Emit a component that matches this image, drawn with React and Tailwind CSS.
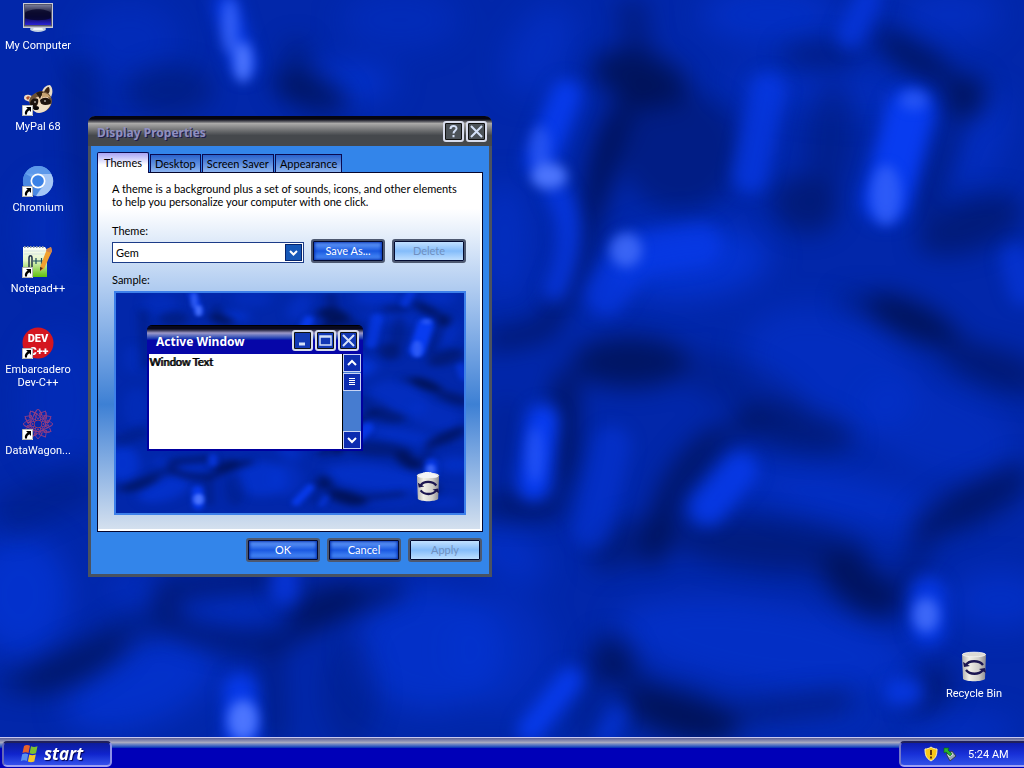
import { useState } from 'react'

// broad pads of lighter blue: cx, cy, rx, ry, rotation, opacity
const pads = [
  [770, 15, 70, 30, 0, 0.6],
  [950, 15, 50, 26, 0, 0.5],
  [830, 90, 110, 22, 5, 0.4],
  [540, 50, 30, 50, 30, 0.5],
  [505, 240, 26, 60, 0, 0.5],
  [980, 140, 24, 50, 20, 0.5],
  [830, 370, 90, 60, 20, 0.5],
  [940, 430, 80, 45, 20, 0.4],
  [850, 500, 110, 24, 12, 0.6],
  [765, 645, 150, 44, 8, 0.65],
  [430, 650, 75, 60, 0, 0.7],
  [140, 685, 80, 40, -20, 0.75],
  [20, 595, 50, 60, 0, 0.8],
  [225, 607, 50, 18, 0, 0.5],
  [135, 590, 30, 16, 0, 0.5],
  [510, 555, 40, 24, 30, 0.6],
  [1000, 600, 50, 30, 0, 0.6],
  [800, 722, 90, 18, 0, 0.4],
  [960, 730, 60, 14, 0, 0.6],
  [500, 650, 50, 60, 0, 0.4],
  [350, 82, 45, 18, 0, 0.8],
  [130, 40, 50, 40, 0, 0.35],
  [400, 20, 60, 30, 0, 0.35],
  [50, 230, 30, 50, 0, 0.3],
  [60, 400, 40, 70, 0, 0.3],
  [690, 262, 80, 36, -5, 0.9],
]

// dark hollows between the pads, same layout
const hollows = [
  [640, 78, 50, 26, 15, 0.8],
  [680, 150, 60, 60, 0, 0.4],
  [604, 160, 14, 60, 14, 0.7],
  [820, 55, 40, 14, 0, 0.4],
  [915, 58, 44, 16, 30, 0.6],
  [965, 98, 20, 24, 30, 0.75],
  [805, 205, 34, 28, 20, 0.5],
  [830, 140, 24, 60, 5, 0.3],
  [970, 225, 56, 26, -20, 0.5],
  [912, 320, 50, 18, 25, 0.8],
  [1000, 370, 60, 22, 15, 0.4],
  [630, 362, 58, 26, 0, 0.75],
  [740, 385, 70, 24, 20, 0.25],
  [562, 430, 14, 60, 0, 0.6],
  [520, 508, 44, 12, 0, 0.5],
  [660, 530, 14, 40, 15, 0.7],
  [690, 465, 16, 50, 40, 0.5],
  [622, 545, 36, 22, -30, 0.45],
  [795, 428, 60, 22, 12, 0.5],
  [770, 545, 100, 26, 5, 0.45],
  [860, 585, 46, 24, 35, 0.7],
  [970, 505, 66, 22, -25, 0.5],
  [612, 660, 22, 26, -20, 0.6],
  [680, 715, 60, 24, 15, 0.75],
  [930, 690, 20, 30, 40, 0.45],
  [325, 603, 40, 18, -20, 0.65],
  [75, 665, 60, 20, -25, 0.5],
  [310, 92, 40, 18, 20, 0.7],
  [170, 90, 44, 26, 0, 0.35],
  [350, 690, 28, 56, 0, 0.2],
]

// dark veins: path, width, opacity
const veins = [
  ['M650 85Q608 120 597 190Q585 260 545 330L488 342', 20, 0.65],
  ['M880 28Q905 60 935 68L966 96', 16, 0.4],
  ['M956 125L920 215', 16, 0.5],
  ['M840 300L915 315L990 365L1024 380', 22, 0.3],
  ['M570 370L568 450L552 508L490 500', 20, 0.45],
  ['M508 400L500 480', 16, 0.3],
  ['M658 555Q655 500 712 445L760 415', 18, 0.5],
  ['M840 560L868 600L895 600L930 530L975 500L1024 465', 22, 0.4],
  ['M606 655L645 690L690 722L850 700', 22, 0.45],
  ['M600 660L580 737', 20, 0.3],
  ['M300 575L165 590Q158 620 190 632Q270 655 300 630Q350 600 400 588', 18, 0.65],
  ['M272 645L276 740', 16, 0.45],
  ['M0 685L80 665L120 630L165 620', 24, 0.35],
  ['M295 40L300 90', 24, 0.35],
  ['M630 0L640 60', 30, 0.4],
  ['M0 520L88 480', 44, 0.25],
  ['M80 60L88 260', 28, 0.3],
]

// bright streaks along the pads: path, width, opacity
const streaks = [
  ['M566 95L540 160', 32, 0.9],
  ['M555 190Q582 230 555 290', 24, 0.7],
  ['M606 295L632 255L700 245', 42, 0.6],
  ['M768 90L750 175', 36, 0.65],
  ['M868 0L850 35', 28, 0.6],
  ['M910 112L886 200', 48, 1],
  ['M1016 260L1024 290', 32, 0.5],
  ['M226 5L244 65', 24, 0.9],
  ['M543 420L534 485', 32, 1],
  ['M612 445L592 530', 38, 0.4],
  ['M740 470L708 508', 36, 0.8],
  ['M928 595L928 628', 36, 0.8],
  ['M898 692L910 692', 28, 0.75],
  ['M570 680L530 730', 26, 0.9],
  ['M618 715L605 737', 20, 0.5],
  ['M285 575L285 590', 30, 0.7],
  ['M240 690L242 740', 34, 0.9],
]

// small hot spots: cx, cy, rx, ry, opacity
const glints = [
  [549, 176, 18, 13, 0.95],
  [540, 148, 10, 22, 0.4],
  [626, 250, 16, 17, 0.7],
  [914, 100, 14, 10, 0.4],
  [886, 195, 15, 30, 0.5],
  [243, 62, 9, 20, 0.95],
  [230, 26, 8, 28, 0.6],
  [535, 455, 8, 28, 0.35],
  [926, 615, 13, 17, 0.75],
  [243, 720, 15, 20, 0.95],
]

function Blur({ id, amount }) {
  return (
    <filter
      id={id}
      filterUnits="userSpaceOnUse"
      x="-60"
      y="-60"
      width="1144"
      height="888"
      colorInterpolationFilters="sRGB"
    >
      <feGaussianBlur stdDeviation={amount} />
    </filter>
  )
}

function Wallpaper({ id }) {
  return (
    <svg
      className="absolute inset-0 h-full w-full"
      viewBox="0 0 1024 768"
      preserveAspectRatio="none"
      aria-hidden="true"
    >
      <defs>
        <Blur id={`${id}-soft`} amount="15" />
        <Blur id={`${id}-vein`} amount="12" />
        <Blur id={`${id}-streak`} amount="8" />
        <Blur id={`${id}-glow`} amount="6" />
      </defs>
      <rect width="1024" height="768" fill="#0227aa" />
      <g fill="#0434d4" filter={`url(#${id}-soft)`}>
        {pads.map(([cx, cy, rx, ry, r, o]) => (
          <ellipse
            key={`${cx}-${cy}`}
            cx={cx}
            cy={cy}
            rx={rx}
            ry={ry}
            opacity={o}
            transform={`rotate(${r} ${cx} ${cy})`}
          />
        ))}
      </g>
      <g filter={`url(#${id}-vein)`}>
        {hollows.map(([cx, cy, rx, ry, r, o]) => (
          <ellipse
            key={`${cx}-${cy}`}
            cx={cx}
            cy={cy}
            rx={rx}
            ry={ry}
            opacity={o}
            fill="#00104e"
            transform={`rotate(${r} ${cx} ${cy})`}
          />
        ))}
        {veins.map(([d, w, o]) => (
          <path key={d} d={d} strokeWidth={w} opacity={o} fill="none" stroke="#00104e" strokeLinejoin="round" />
        ))}
      </g>
      <g fill="none" stroke="#083cf0" strokeLinecap="round" strokeLinejoin="round" filter={`url(#${id}-streak)`}>
        {streaks.map(([d, w, o]) => (
          <path key={d} d={d} strokeWidth={w} opacity={o} />
        ))}
      </g>
      <g fill="#5078ff" filter={`url(#${id}-glow)`}>
        {glints.map(([cx, cy, rx, ry, o]) => (
          <ellipse key={`${cx}-${cy}`} cx={cx} cy={cy} rx={rx} ry={ry} opacity={o} />
        ))}
      </g>
    </svg>
  )
}

function ShortcutArrow() {
  return (
    <g>
      <rect x="0" y="21" width="11" height="11" fill="#fff" />
      <rect x="0.5" y="21.5" width="10" height="10" fill="none" stroke="#888" strokeWidth="0.6" />
      <path d="M4 23h5v5l-1.700-1.700c-1.800 1.200-2.300 2.300-2.300 4.200H3c-.6-2.700.6-4.500 2.600-5.900z" fill="#000" />
    </g>
  )
}

function ComputerIcon() {
  return (
    <svg width="32" height="32" viewBox="0 0 32 32">
      <defs>
        <linearGradient id="screen" x1="0" y1="0" x2="0" y2="1">
          <stop offset="0" stopColor="#777a98" />
          <stop offset="0.4" stopColor="#1b1a3c" />
          <stop offset="0.6" stopColor="#0a0a50" />
          <stop offset="1" stopColor="#2a22d8" />
        </linearGradient>
      </defs>
      <ellipse cx="16" cy="26" rx="8" ry="3" fill="#c4d2e2" />
      <path d="M12 24h8l1 3H11z" fill="#f0f5fa" />
      <path d="M1 0h30v25H1z" fill="#c9cbd6" />
      <path d="M2 1h28v22.500H2z" fill="#55566c" />
      <path d="M3 2h26v20H3z" fill="url(#screen)" />
      <path d="M3 10C8 5 24 5 29 10v5c-6 3-20 3-26 0z" fill="#07062a" opacity="0.8" />
    </svg>
  )
}

function RaccoonIcon() {
  return (
    <svg width="32" height="32" viewBox="0 0 32 32">
      <path d="M20 8c1-4 4-7 8-7 3 3 3 8 1 12z" fill="#e9dcc6" />
      <path d="M22 8c1-3 3-5 5-5 1 3 1 5-1 7z" fill="#3b2414" />
      <path d="M2 14c0-4 4-4 8-2l-2 6c-3-1-6-2-6-4z" fill="#f0d9c4" />
      <path d="M4 14c1-2 3-2 4-1l-2 3z" fill="#b0502a" />
      <path d="M8 14C12 8 19 6 24 8c6 3 7 9 5 13-2 5-7 8-12 7-5 0-8-3-9-7-1-3-1-5 0-7z" fill="#6d5237" />
      <path d="M9 18c4-4 10-9 17-5l3 5c-4 0-6 5-11 5-4 1-8-2-9-5z" fill="#ecd0b0" />
      <path d="M8 19c1-4 5-6 8-4 1 4-1 8-4 8-2 0-4-1-4-4z" fill="#1d130e" />
      <path d="M18 16c4-4 10-2 11 1 0 4-4 5-7 4-2 0-4-2-4-5z" fill="#1d130e" />
      <path d="M14 9l4 6 3-7c-3-1-5 0-7 1z" fill="#2a1c12" />
      <path d="M20 9c4-1 7 2 9 5-3-1-6-2-9 0z" fill="#c5a171" />
      <path d="M9 23c4 2 7-1 8-5 2 3 6 4 12 2-2 5-7 9-12 9-3 0-6-2-8-6z" fill="#f0e0c8" />
      <ellipse cx="14" cy="24" rx="3" ry="2" fill="#0c0808" />
      <circle cx="13" cy="18" r="0.8" fill="#fff" />
      <circle cx="23" cy="17" r="0.8" fill="#fff" />
      <ShortcutArrow />
    </svg>
  )
}

function ChromiumIcon() {
  return (
    <svg width="32" height="32" viewBox="0 0 32 32">
      <circle cx="16" cy="16" r="15" fill="#6aa4ee" />
      <path d="M16 16 3 8.500A15 15 0 0 0 14 31l7-12z" fill="#4a88e2" />
      <path d="M16 9h13.300A15 15 0 0 1 14 31l8-11z" fill="#a4c6f6" />
      <path d="M3 8.500A15 15 0 0 1 29.300 9H16z" fill="#5c98ea" />
      <circle cx="16" cy="16" r="7.500" fill="#fff" />
      <circle cx="16" cy="16" r="5.800" fill="#3b82e6" />
      <ShortcutArrow />
    </svg>
  )
}

function NotepadIcon() {
  return (
    <svg width="32" height="32" viewBox="0 0 32 32">
      <defs>
        <linearGradient id="page" x1="0" y1="0" x2="0" y2="1">
          <stop offset="0" stopColor="#fdfffa" />
          <stop offset="0.450" stopColor="#e4f5c8" />
          <stop offset="1" stopColor="#5fc10c" />
        </linearGradient>
      </defs>
      <path d="M1 1h22l2 3v27H1z" fill="url(#page)" />
      <path d="M2 1h21" stroke="#8a98a8" strokeWidth="2" strokeDasharray="1.500 1.500" />
      <path d="M2 5h22M2 8h22" stroke="#c8d8dc" strokeWidth="0.7" />
      <path d="M7 22V12c0-3 3-3 3 0v10" fill="none" stroke="#203048" strokeWidth="1.500" />
      <path d="M11 15h6m-3-3v6M17 15h5m-2.500-3v6" stroke="#1f5060" strokeWidth="1.200" />
      <path d="m25 3 4-2 1 4-8 18-4 2 .4-5z" fill="#f0a030" />
      <path d="m25 3 4-2 1 4-1 2-5-2z" fill="#d0844c" />
      <path d="m18 21 3 1-3 3z" fill="#4c3018" />
      <ShortcutArrow />
    </svg>
  )
}

function DevCppIcon() {
  return (
    <svg width="32" height="32" viewBox="0 0 32 32">
      <circle cx="16" cy="16" r="15.500" fill="#d41620" />
      <text x="16" y="15" textAnchor="middle" fill="#fff" className="font-['Roboto',sans-serif] text-[11px] font-black">
        DEV
      </text>
      <text x="17" y="28" textAnchor="middle" fill="#fff" className="font-['Roboto',sans-serif] text-[11px] font-black">
        C++
      </text>
      <ShortcutArrow />
    </svg>
  )
}

function WagonIcon() {
  return (
    <svg width="32" height="32" viewBox="0 0 32 32">
      <g fill="none" stroke="#a8407c" strokeWidth="0.9" opacity="0.85">
        {[0, 30, 60, 90, 120, 150].map((a) => (
          <g key={a} transform={`rotate(${a} 16 16)`}>
            <path d="M16 1l4 5-4 5-4-5zM16 31l4-5-4-5-4 5zM10 3l12 8M10 29l12-8" />
          </g>
        ))}
        <circle cx="16" cy="16" r="10" stroke="#c4485c" strokeDasharray="1.500 2" />
        <circle cx="16" cy="16" r="4" stroke="#d4404c" />
      </g>
      <circle cx="16" cy="16" r="2.500" fill="#0a27a8" />
      <ShortcutArrow />
    </svg>
  )
}

function BinIcon({ full, id }) {
  return (
    <svg width="32" height="32" viewBox="0 0 32 32">
      <defs>
        <linearGradient id={id} x1="0" y1="0" x2="1" y2="0">
          <stop offset="0" stopColor="#b0aeac" />
          <stop offset="0.3" stopColor="#f2f0e8" />
          <stop offset="0.7" stopColor="#d0ceca" />
          <stop offset="1" stopColor="#8c8a90" />
        </linearGradient>
      </defs>
      <path d="M4 3c4-2 20-2 24 0l-1 25c-3 3-19 3-22 0z" fill={`url(#${id})`} />
      <ellipse cx="16" cy="3.500" rx="11.500" ry="2.300" fill="#dcdad4" stroke="#f4f4f4" strokeWidth="0.8" />
      {full && <path d="M5 5c1-3 4-2 5-4 2-1 3 0 4-2 2 0 3 2 5 1 2 2 6 2 8 5-4 2-18 2-22 0z" fill="#f4f4f6" />}
      <path
        d="M8 14C11 9 21 9 25 14M25 19C21 24 12 24 8 19"
        fill="none"
        stroke="#1c1650"
        strokeWidth="2.400"
      />
      <path d="M5 11l1 5 6-1zM28 22l-1-5-6 1z" fill="#1c1650" />
    </svg>
  )
}

function WindowsFlag() {
  return (
    <svg width="20" height="20" viewBox="0 0 20 20" aria-hidden="true">
      <path d="M4 2c2-1.500 4-1.300 6-.2L8.500 9C6.500 8 4.500 8 2.500 9z" fill="#e8622a" />
      <path d="M11 2.300c2 1 4 1 6.500 0L16 9.300c-2.300 1-4.500 1-6.400 0z" fill="#7cc030" />
      <path d="M2.200 10.200c2-1 4-1 6 0L6.800 17c-2-1-4-1-6 .2z" fill="#5a90f0" />
      <path d="M9.300 10.500c2 1 4 1 6.500 0l-1.500 7c-2.300 1-4.500 1-6.400 0z" fill="#f4c828" />
    </svg>
  )
}

const shortcuts = [
  { label: 'My Computer', icon: ComputerIcon },
  { label: 'MyPal 68', icon: RaccoonIcon },
  { label: 'Chromium', icon: ChromiumIcon },
  { label: 'Notepad++', icon: NotepadIcon },
  { label: 'Embarcadero Dev-C++', icon: DevCppIcon },
  { label: 'DataWagon...', icon: WagonIcon },
]

const tabs = ['Themes', 'Desktop', 'Screen Saver', 'Appearance']

function DesktopIcon({ label, children }) {
  return (
    <button
      type="button"
      className="flex h-[81px] w-[76px] flex-col items-center gap-[4px] text-center font-['Roboto',sans-serif] text-[11px] leading-[13px] text-white"
    >
      {children}
      <span>{label}</span>
    </button>
  )
}

function DialogButton({ children, disabled }) {
  return (
    <button
      type="button"
      disabled={disabled}
      className={
        'h-[24px] w-[74px] rounded-[3px] border-2 border-[#4d5870] text-[11px] leading-[16px] ' +
        (disabled
          ? 'bg-linear-to-b from-[#c8e4ff] via-[#84bcfa] to-[#c4e2ff] text-[#7090c0] shadow-[inset_0_0_0_1px_#020a30]'
          : 'bg-linear-to-b from-[#78acff] via-[#1a58e0] to-[#5c9cff] text-white shadow-[inset_0_0_0_1px_#020a30,inset_0_0_3px_2px_#0430b0]')
      }
    >
      {children}
    </button>
  )
}

function CaptionButton({ label, dark, children }) {
  return (
    <button
      type="button"
      aria-label={label}
      className={
        'grid h-[21px] w-[21px] place-items-center rounded-[3px] border-2 border-[#d8dcec] shadow-[inset_0_0_0_1px_#111] ' +
        (dark ? 'bg-[#4c5258]' : 'bg-[#1238b4]')
      }
    >
      <svg width="15" height="15" viewBox="0 0 15 15" fill="none" stroke="#d4e0f8" strokeWidth="2">
        {children}
      </svg>
    </button>
  )
}

function ScrollButton({ label, d }) {
  return (
    <button
      type="button"
      aria-label={label}
      className="grid h-[18px] w-[18px] place-items-center border border-[#c8d4f4] bg-[#0c2cb0]"
    >
      <svg width="12" height="12" viewBox="0 0 12 12" fill="none" stroke="#fff" strokeWidth="2">
        <path d={d} />
      </svg>
    </button>
  )
}

function Preview() {
  return (
    <div className="relative ml-[2px] h-[224px] overflow-hidden border-2 border-[#3d80ea]">
      <Wallpaper id="mini" />
      <div className="absolute top-[33px] left-[31px] w-[216px] rounded-t-[5px] border-x-2 border-b-2 border-[#0000a0] bg-[#0000a0] shadow-[0_-1px_0_#000]">
        <div className="-mx-[2px] flex h-[28px] items-center gap-[2px] rounded-t-[5px] bg-linear-to-b from-[#08081c] from-10% via-[#9c98c8] via-25% to-[#0606a8] to-50% pr-[4px] pl-[9px]">
          <span className="flex-1 pt-[3px] font-['Noto_Sans',sans-serif] text-[12px] font-bold text-white">
            Active Window
          </span>
          <CaptionButton label="Minimize">
            <path d="M4 11h6" strokeWidth="3" />
          </CaptionButton>
          <CaptionButton label="Maximize">
            <path d="M2 3h11v9H2zM2 4h11" strokeWidth="1.500" />
          </CaptionButton>
          <CaptionButton label="Close">
            <path d="m2 2 11 11M13 2 2 13" />
          </CaptionButton>
        </div>
        <div className="flex h-[95px] bg-white">
          <p className="flex-1 pt-[1px] text-[11px] leading-[13px] text-black text-shadow-[1px_0_0_#000]">
            Window Text
          </p>
          <div className="flex w-[19px] flex-col gap-[1px] border-l border-black bg-[#467cd0]">
            <ScrollButton label="Scroll up" d="m2 8 4-4 4 4" />
            <button
              type="button"
              aria-label="Scroll thumb"
              className="grid h-[18px] w-[18px] place-items-center border border-[#c8d4f4] bg-[#0c2cb0]"
            >
              <svg width="8" height="8" viewBox="0 0 8 8" stroke="#fff" strokeWidth="1">
                <path d="M1 .5h6M1 2.500h6M1 4.500h6M1 6.500h6" />
              </svg>
            </button>
            <div className="flex-1" />
            <ScrollButton label="Scroll down" d="m2 4 4 4 4-4" />
          </div>
        </div>
      </div>
      <div className="absolute right-[24px] bottom-[10px] w-[24px]">
        <svg width="24" height="32" viewBox="3 -1 26 33" preserveAspectRatio="none" className="overflow-visible">
          <BinIcon id="bin-mini" full />
        </svg>
      </div>
    </div>
  )
}

function DisplayProperties() {
  const [tab, setTab] = useState('Themes')
  const [theme, setTheme] = useState('Gem')

  return (
    <section
      aria-label="Display Properties"
      className="absolute top-[116px] left-[88px] w-[404px] rounded-t-[7px] border-3 border-t-0 border-[#4a5260] bg-[#3385ea] font-['Lato',sans-serif] text-[11px] leading-[13px] text-black"
    >
      <header className="-mx-[3px] flex h-[30px] items-center gap-[2px] rounded-t-[7px] bg-linear-to-b from-[#050510] from-10% via-[#aaa9a8] via-25% to-[#45484c] to-65% pr-[5px] pl-[9px]">
        <h1 className="flex-1 pt-[3px] font-['Noto_Sans',sans-serif] text-[12px] font-bold text-[#8f8fc0] text-shadow-[1px_1px_0_#1c1c4c]">
          Display Properties
        </h1>
        <CaptionButton label="Help" dark>
          <path d="M4.500 5c0-4 6-4 6-.5 0 2-3 2-3 5M7.500 11v2.200" />
        </CaptionButton>
        <CaptionButton label="Close" dark>
          <path d="m2 2 11 11M13 2 2 13" />
        </CaptionButton>
      </header>

      <div className="px-[6px] pt-[6px] pb-[12px]">
        <div role="tablist" className="flex h-[20px] items-end gap-[1px]">
          {tabs.map((name) => (
            <button
              key={name}
              type="button"
              role="tab"
              aria-selected={tab === name}
              onClick={() => setTab(name)}
              className={
                'border border-b-0 border-[#0a0a50] text-[11px] ' +
                (tab === name
                  ? 'z-10 -mb-[1px] h-[21px] rounded-t-[2px] bg-linear-to-b from-[#a8a4f4] to-white to-60% px-[6px] pb-[2px]'
                  : 'h-[18px] bg-linear-to-b from-[#2a62cc] to-[#8cb4f0] px-[4px]')
              }
            >
              {name}
            </button>
          ))}
        </div>

        <div role="tabpanel" className="border border-[#05052c] bg-white pr-[2px] pb-[2px]">
          <div className="bg-linear-to-b from-white from-10% via-[#3d80d4] via-65% to-[#d4e0ee] px-[14px] pt-[9px] pb-[14px]">
            <p>
              A theme is a background plus a set of sounds, icons, and other elements to help you personalize your
              computer with one click.
            </p>
            <label htmlFor="theme" className="mt-[16px] block">
              Theme:
            </label>
            <div className="mt-[2px] flex items-center gap-[7px]">
              <div className="relative mt-[3px] flex-1">
                <select
                  id="theme"
                  value={theme}
                  onChange={(e) => setTheme(e.target.value)}
                  className="block h-[21px] w-full appearance-none border border-[#1c3c88] bg-white pl-[3px] text-[11px]"
                >
                  <option>Gem</option>
                </select>
                <span className="pointer-events-none absolute top-[2px] right-[2px] grid h-[17px] w-[17px] place-items-center border border-[#06246c] bg-[#1658b8]">
                  <svg width="9" height="6" viewBox="0 0 9 6" fill="none" stroke="#fff" strokeWidth="2">
                    <path d="m1 1 3.500 3.500L8 1" />
                  </svg>
                </span>
              </div>
              <DialogButton>Save As...</DialogButton>
              <DialogButton disabled>Delete</DialogButton>
            </div>
            <h2 className="mt-[10px] mb-[5px]">Sample:</h2>
            <Preview />
          </div>
        </div>

        <div className="mt-[6px] flex justify-end gap-[7px] pr-[1px]">
          <DialogButton>OK</DialogButton>
          <DialogButton>Cancel</DialogButton>
          <DialogButton disabled>Apply</DialogButton>
        </div>
      </div>
    </section>
  )
}

function Taskbar() {
  return (
    <footer className="relative flex h-[31px] items-end justify-between border-t border-[#c8c8f0] bg-linear-to-b from-[#5c6098] via-[#a8a8c0] via-15% to-[#0000b8] to-35%">
      <button
        type="button"
        className="ml-[2px] mb-[1px] flex h-[26px] w-[110px] items-center gap-[4px] rounded-[5px] border-2 border-t-[#20205c] border-r-[#8c90e8] border-b-[#9ca0f4] border-l-[#6468b8] bg-linear-to-b from-[#0c1c9c] via-[#1024cc] to-[#3450ec] pl-[16px] font-['Open_Sans',sans-serif] text-[17px] leading-[20px] font-bold text-white italic text-shadow-[1px_1px_1px_#000050]"
      >
        <WindowsFlag />
        start
      </button>
      <div className="mb-[1px] flex h-[26px] w-[125px] items-center rounded-l-[5px] border-2 border-r-0 border-t-[#20205c] border-b-[#9ca0f4] border-l-[#7478c8] bg-linear-to-b from-[#0c1cb0] via-[#1830d8] to-[#3050e8] pl-[22px] font-['Roboto',sans-serif] text-[11px] leading-[13px] text-white">
        <svg width="16" height="16" viewBox="0 0 16 16" aria-hidden="true">
          <path d="M8 1c2 1.500 4 2 6 2 0 6-1 9-6 12C3 12 2 9 2 3c2 0 4-.5 6-2z" fill="#f8c818" stroke="#fff4b0" />
          <path d="M8 4v5M8 10.500v2" stroke="#50280c" strokeWidth="1.800" />
        </svg>
        <svg width="16" height="16" viewBox="0 0 16 16" className="ml-[2px]" aria-hidden="true">
          <path d="m5 8 6-3 4 5-6 5z" fill="#9ca8b4" stroke="#303c50" />
          <path d="m7 9 4-2 1 2-4 2z" fill="#e0e8ee" />
          <path d="M3 2h5L7 4l4 4-2 2-4-4-2 1z" fill="#28b428" stroke="#085c10" strokeWidth="0.6" />
        </svg>
        <span className="ml-[11px]">5:24 AM</span>
      </div>
    </footer>
  )
}

export default function App() {
  return (
    <div className="relative flex h-screen flex-col overflow-hidden bg-[#0227aa]">
      <Wallpaper id="desk" />
      <main className="relative flex-1">
        <nav aria-label="Desktop icons" className="flex w-[76px] flex-col pt-[3px]">
          {shortcuts.map(({ label, icon: Icon }) => (
            <DesktopIcon key={label} label={label}>
              <Icon />
            </DesktopIcon>
          ))}
        </nav>
        <div className="absolute right-[12px] bottom-[5px]">
          <DesktopIcon label="Recycle Bin">
            <BinIcon id="bin-desk" />
          </DesktopIcon>
        </div>
        <DisplayProperties />
      </main>
      <Taskbar />
    </div>
  )
}
